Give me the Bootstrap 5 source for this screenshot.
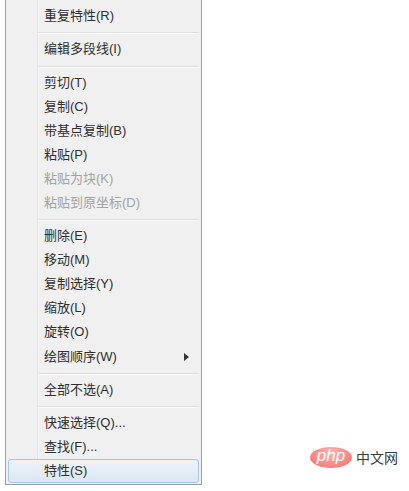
<!DOCTYPE html>
<html lang="zh">
<head>
<meta charset="utf-8">
<title>菜单</title>
<link href="https://cdn.jsdelivr.net/npm/bootstrap@5.3.0/dist/css/bootstrap.min.css" rel="stylesheet">
<style>
html,body{height:491px;overflow:hidden;background:#fff;}
body{font-family:"Liberation Sans","Noto Sans CJK SC",sans-serif;font-size:13px;color:#2f2f2f;}
.stage{width:409px;height:491px;padding-left:5px;}
.ctx-menu{width:197px;height:486px;margin-top:-1px;padding:4px 2px 2px;background:linear-gradient(90deg,#f0f0f0 0,#f0f0f0 31px,#e3e3e3 31px,#e3e3e3 32px,#f6f6f6 32px,#f0f0f0 33px);border:1px solid #9a9fa5;border-top-color:#b5b5b5;list-style:none;margin-bottom:0;}
.ctx-item{height:24.05px;padding-left:36px;padding-right:10px;line-height:24px;white-space:nowrap;}
.ctx-item.off{color:#a3a3a3;}
.ctx-item.hot{border:1px solid #a9c6e6;border-radius:3px;background:linear-gradient(#eef3f9,#dce7f3);line-height:22px;padding-left:35px;height:24px;}
.ctx-sep{height:9.3px;display:flex;align-items:center;padding-left:31px;}
.ctx-sep::before{content:"";display:block;width:100%;height:1px;background:#dcdcdc;box-shadow:0 1px 0 #fafafa;}
.arrow{width:0;height:0;border-left:5px solid #333;border-top:4px solid transparent;border-bottom:4px solid transparent;}
.brand{right:11px;bottom:23px;height:20px;}
.brand-pill{width:42px;height:21px;border-radius:50%;background:radial-gradient(ellipse at 50% 25%,#fdb3ae,#f77f7c 75%);color:#fff;font-family:"Liberation Sans",sans-serif;font-style:italic;font-size:17px;line-height:18px;text-align:center;}
.brand-txt{font-family:"Noto Sans CJK SC",sans-serif;font-size:14px;line-height:20px;color:#3a3a3a;}
</style>
</head>
<body>
<div class="stage position-relative">
<ul class="ctx-menu">
<li class="ctx-item">重复特性(R)</li>
<li class="ctx-sep"></li>
<li class="ctx-item">编辑多段线(I)</li>
<li class="ctx-sep"></li>
<li class="ctx-item">剪切(T)</li>
<li class="ctx-item">复制(C)</li>
<li class="ctx-item">带基点复制(B)</li>
<li class="ctx-item">粘贴(P)</li>
<li class="ctx-item off">粘贴为块(K)</li>
<li class="ctx-item off">粘贴到原坐标(D)</li>
<li class="ctx-sep"></li>
<li class="ctx-item">删除(E)</li>
<li class="ctx-item">移动(M)</li>
<li class="ctx-item">复制选择(Y)</li>
<li class="ctx-item">缩放(L)</li>
<li class="ctx-item">旋转(O)</li>
<li class="ctx-item d-flex justify-content-between align-items-center">绘图顺序(W)<span class="arrow"></span></li>
<li class="ctx-sep"></li>
<li class="ctx-item">全部不选(A)</li>
<li class="ctx-sep"></li>
<li class="ctx-item">快速选择(Q)...</li>
<li class="ctx-item">查找(F)...</li>
<li class="ctx-item hot">特性(S)</li>
</ul>
<div class="brand position-absolute d-flex align-items-center gap-1">
<div class="brand-pill">php</div>
<div class="brand-txt">中文网</div>
</div>
</div>
</body>
</html>
